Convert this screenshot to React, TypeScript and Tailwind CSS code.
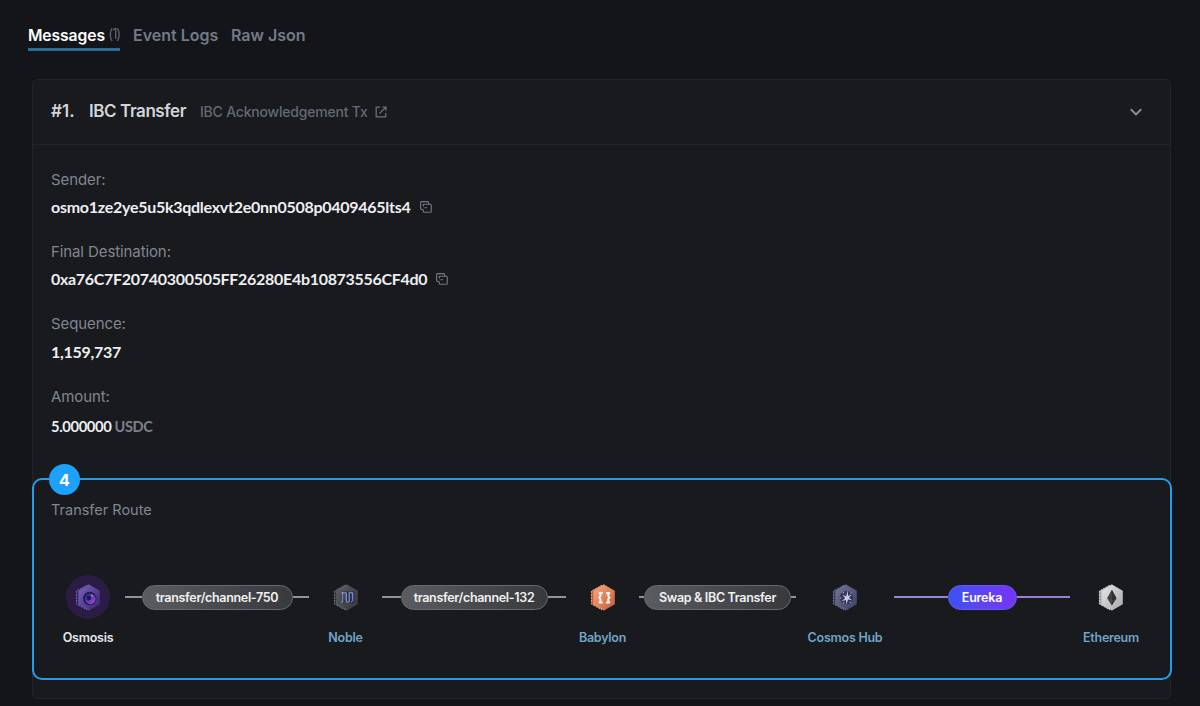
import { ReactNode } from "react";
import clsx from "clsx";

type Chain = "osmosis" | "noble" | "babylon" | "cosmos" | "ethereum";

const palette: Record<Chain, { from: string; to: string; edge: string }> = {
  osmosis: { from: "#7a62bd", to: "#382371", edge: "#7763ab" },
  noble: { from: "#5c5c62", to: "#35353c", edge: "#707076" },
  babylon: { from: "#f3ab83", to: "#c85a35", edge: "#eea481" },
  cosmos: { from: "#73759a", to: "#3d3e60", edge: "#73758e" },
  ethereum: { from: "#e8e8e9", to: "#a7a7aa", edge: "#cdcdce" },
};

const glyphs: Record<Chain, ReactNode> = {
  osmosis: (
    <>
      <defs>
        <linearGradient id="lens" x1="0" y1="0" x2="1" y2="1">
          <stop stopColor="#2a2c8c" />
          <stop offset="0.5" stopColor="#5a3cb0" />
          <stop offset="1" stopColor="#c04bc0" />
        </linearGradient>
      </defs>
      <circle cx="14.8" cy="14.5" r="6.8" fill="#251a4c" />
      <circle cx="15.2" cy="14.8" r="5.4" fill="url(#lens)" />
      <circle cx="13.8" cy="14" r="2.4" fill="#1c1c5e" />
      <circle cx="17" cy="11.8" r="0.9" fill="#b09aef" />
    </>
  ),
  noble: (
    <g fill="none">
      <path
        d="M10 8.5h4.5v9h-3M10 10v8.5M17.2 8.5v9.3h-3M17 8.5h3.5v8l-2 2.2"
        stroke="#20264f"
        strokeWidth="2.2"
      />
      <path
        d="M8.5 8.8h4.8v8.5M9.8 9v9H8M16.2 8.5v9.5h-3.6M16.5 8.8h3.3v7.6l-1.6 2"
        stroke="#98a8da"
        strokeWidth="1"
      />
    </g>
  ),
  babylon: (
    <path
      d="M12.7 9h-2.3v3l-1.2 1.5 1.2 1.5v3.5h2.3M16 9h2.3v3l1.2 1.5-1.2 1.5v3.5H16M8.8 8.5l2 1.5M20 8.5L18 10M8.8 19l2-1.5M20 19l-2-1.5"
      fill="none"
      stroke="#fff4ee"
      strokeWidth="2"
    />
  ),
  cosmos: (
    <>
      <circle cx="14.5" cy="13.8" r="6.8" fill="#34355a" />
      <path
        d="M15.8 6.5l-1.6 5.8-4-1.4 3 3.2-3.6 3.2 4.4-1.2.4 4.6 1.6-5.2 4.2.8-3.2-2.6 2.8-3.2-3.6 1.4z"
        fill="#c9cbe2"
      />
      <g fill="#a4a6c8">
        <circle cx="11.4" cy="8.8" r="0.7" />
        <circle cx="19" cy="9" r="0.7" />
        <circle cx="18.4" cy="18.4" r="0.7" />
        <circle cx="11.6" cy="19" r="0.7" />
        <circle cx="8.6" cy="14" r="0.7" />
      </g>
    </>
  ),
  ethereum: (
    <>
      <path d="M14 5.8l4.6 8.4-4.6 7.3-4.6-7.3z" fill="#303033" />
      <path d="M14 5.8v15.7l-4.6-7.3z" fill="#414144" />
      <path d="M9.8 15.4l4.2 2 4.2-2" stroke="#5a5a5d" strokeWidth="0.6" fill="none" />
    </>
  ),
};

const ChainIcon = ({ chain }: { chain: Chain }) => {
  const { from, to, edge } = palette[chain];

  return (
    <svg className="h-[27px] w-[26px]" viewBox="0 0 26 27">
      <defs>
        <linearGradient id={`hex-${chain}`} x1="0" y1="0" x2="1" y2="1">
          <stop stopColor={from} />
          <stop offset="1" stopColor={to} />
        </linearGradient>
      </defs>
      <path d="M12 1L1.2 7v13L12 26" fill={to} />
      <path
        d="M12 1.2L1.4 7v13L12 25.8"
        fill="none"
        stroke={edge}
        strokeDasharray="2 1"
      />
      <path d="M14 .6L3.6 6.8v13.4L14 26.4l10.8-6.2V6.8z" fill={`url(#hex-${chain})`} />
      <path
        d="M14 .8L3.8 6.8v13.3L14 26"
        fill="none"
        stroke={edge}
        strokeWidth="0.8"
        strokeDasharray="1.4 .7"
      />
      {glyphs[chain]}
    </svg>
  );
};

const CopyIcon = () => (
  <svg
    className="h-3 w-3"
    viewBox="0 0 12 12"
    fill="none"
    stroke="#767a83"
    strokeWidth="1.1"
  >
    <path d="M3 8.5H1.6a1 1 0 0 1-1-1V1.6a1 1 0 0 1 1-1h6a1 1 0 0 1 1 1V3" />
    <path d="M5.5 3.3h4.8a1 1 0 0 1 1 1v6a1 1 0 0 1-1 1h-6a1 1 0 0 1-1-1V8.5M3.3 5.5V3.3h2.2M4.5 6.7H7" />
  </svg>
);

const ExternalIcon = () => (
  <svg
    className="h-3 w-3"
    viewBox="0 0 12 12"
    fill="none"
    stroke="#6b7280"
    strokeWidth="1.2"
  >
    <path d="M5 1.2H1.2v9.6h9.6V7M7.3 1h3.7v3.7M10.8 1.2L4.5 7.5" />
  </svg>
);

const Field = ({ label, children }: { label: string; children: ReactNode }) => (
  <div className="h-[72.2px]">
    <p className="h-[27px] text-[15px] leading-5 tracking-[-0.1px] text-[#808691]">
      {label}
    </p>
    <div className="flex h-5 items-center gap-[9px] font-['Lato'] text-base leading-5 font-bold tracking-[-0.27px] text-[#eceef1]">
      {children}
    </div>
  </div>
);

const Node = ({ chain, name }: { chain: Chain; name: string }) => (
  <div className="flex flex-col items-center">
    <div
      className={clsx(
        "flex h-11 w-11 items-center justify-center rounded-full",
        chain === "osmosis" && "bg-[#2a1c42]"
      )}
    >
      <ChainIcon chain={chain} />
    </div>
    <p
      className={clsx(
        "mt-[9px] text-[12.5px] leading-5 font-semibold tracking-[-0.25px] whitespace-nowrap",
        chain === "osmosis" ? "text-[#e3e5e9]" : "text-[#6fa5c6]"
      )}
    >
      {name}
    </p>
  </div>
);

const Channel = ({ label, width }: { label: string; width: string }) => (
  <div className="flex h-11 items-center">
    <span className="h-0.5 flex-1 bg-[#929397]" />
    <span
      className={clsx(
        "flex h-[25px] items-center justify-center rounded-full border border-[#68696d] bg-linear-to-r from-[#5b5c5f] to-[#38393d] pt-0.5 text-[12.5px] font-semibold tracking-[-0.32px] whitespace-nowrap text-[#f0f1f2]",
        width
      )}
    >
      {label}
    </span>
    <span className="h-0.5 flex-1 bg-[#929397]" />
  </div>
);

export default function App() {
  return (
    <main className="h-[706px] w-[1200px] overflow-hidden bg-[#131519] font-['Inter',sans-serif]">
      <nav className="flex h-[79px] gap-[13px] pt-6 pl-7 text-base leading-[23px] font-semibold text-[#737b89]">
        <div className="flex h-[27px] w-[92px] items-start justify-between border-b-[3px] border-[#2e6d93] whitespace-nowrap">
          <span className="text-[15.7px] tracking-[-0.1px] text-white">Messages</span>
          <span className="text-sm font-light tracking-[-1.2px]">(1)</span>
        </div>
        <span className="w-[85px] whitespace-nowrap">Event Logs</span>
        <span className="whitespace-nowrap">Raw Json</span>
      </nav>

      <section className="ml-8 h-[620px] w-[1139px] rounded-md border border-[#222429] bg-[#181a1d]">
        <header className="flex h-[65px] items-center border-b border-[#222429] pr-7 pl-[18px]">
          <h2 className="w-[38px] text-[17px] font-semibold text-[#d2d4d8]">#1.</h2>
          <h2 className="w-[111px] text-[17px] font-semibold tracking-[-0.42px] whitespace-nowrap text-[#d2d4d8]">
            IBC Transfer
          </h2>
          <span className="w-[175px] text-sm font-medium tracking-[-0.2px] whitespace-nowrap text-[#626a77]">
            IBC Acknowledgement Tx
          </span>
          <ExternalIcon />
          <svg
            className="ml-auto h-3 w-3"
            viewBox="0 0 12 12"
            fill="none"
            stroke="#8c8e92"
            strokeWidth="2"
          >
            <path d="M.8 3.2L6 8.4l5.2-5.2" />
          </svg>
        </header>

        <div className="h-[333px] pt-[25px] pl-[18px]">
          <Field label="Sender:">
            <span>osmo1ze2ye5u5k3qdlexvt2e0nn0508p0409465lts4</span>
            <CopyIcon />
          </Field>
          <Field label="Final Destination:">
            <span className="tracking-[-0.3px]">
              0xa76C7F20740300505FF26280E4b10873556CF4d0
            </span>
            <CopyIcon />
          </Field>
          <Field label="Sequence:">
            <span className="mt-px">1,159,737</span>
          </Field>
          <Field label="Amount:">
            <p className="mt-1.5 text-[14.8px] tracking-[-0.4px]">
              5.000000{" "}
              <span className="text-[14.5px] text-[#7b818b]">USDC</span>
            </p>
          </Field>
        </div>

        <div className="relative -ml-px h-[202px] w-[1140px] rounded-[10px] border-2 border-[#219fee] pt-5 pl-[17px]">
          <span className="absolute -top-4 left-[15px] flex h-[31px] w-[31px] items-center justify-center rounded-full bg-[#1da1ff] text-base font-bold text-white">
            4
          </span>
          <p className="text-[14.5px] leading-5 text-[#808691]">Transfer Route</p>
          <div className="mt-[55px] grid grid-cols-[74px_184px_73px_184px_73px_157px_98px_176px_82px]">
            <Node chain="osmosis" name="Osmosis" />
            <Channel label="transfer/channel-750" width="w-[151px]" />
            <Node chain="noble" name="Noble" />
            <Channel label="transfer/channel-132" width="w-[147px]" />
            <Node chain="babylon" name="Babylon" />
            <Channel label="Swap & IBC Transfer" width="w-[147px]" />
            <Node chain="cosmos" name="Cosmos Hub" />
            <div className="flex h-11 items-center">
              <span className="h-0.5 flex-1 bg-[#8c8bd8]" />
              <span className="flex h-[25px] w-[69px] items-center justify-center rounded-full border border-[#6558ee] bg-linear-to-r from-[#3d50f5] to-[#7433f6] pt-0.5 text-[12.5px] font-semibold tracking-[-0.2px] text-white">
                Eureka
              </span>
              <span className="h-0.5 flex-1 bg-[#9a80d3]" />
            </div>
            <Node chain="ethereum" name="Ethereum" />
          </div>
        </div>
      </section>
    </main>
  );
}
